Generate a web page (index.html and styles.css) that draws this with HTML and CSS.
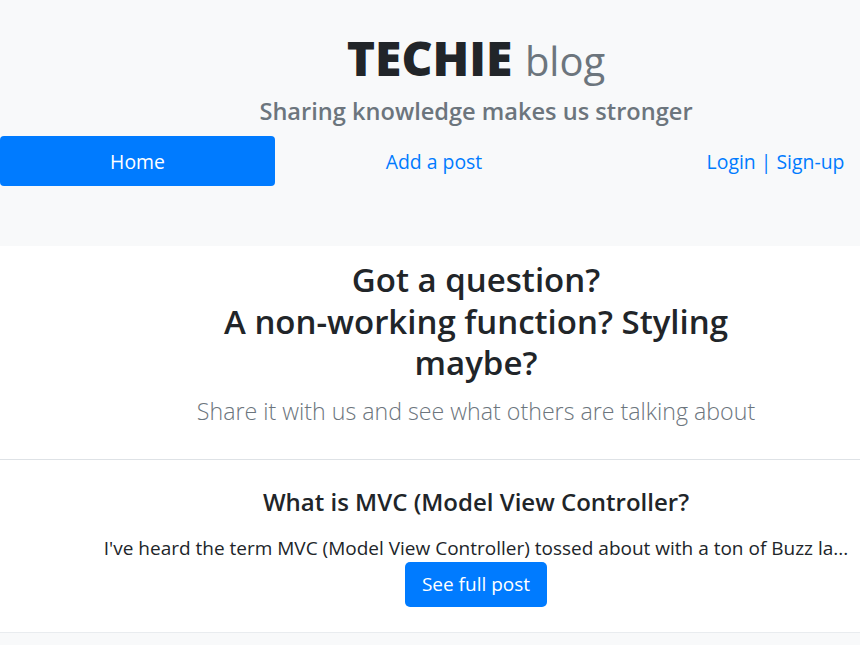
FILE: index.html
```html
<!DOCTYPE html>
<html lang="en">
<head>
<meta charset="utf-8">
<title>TECHIE blog</title>
<link rel="stylesheet" href="styles.css">
</head>
<body>
<div class="page">
  <header class="masthead">
    <h1 class="brand"><strong>TECHIE</strong> <small>blog</small></h1>
    <p class="tagline">Sharing knowledge makes us stronger</p>
    <nav class="mainnav">
      <a class="nav-link active" href="#">Home</a>
      <a class="nav-link" href="#">Add a post</a>
      <span class="nav-link"><span class="auth"><a href="#">Login</a> | <a href="#">Sign-up</a></span></span>
    </nav>
  </header>
  <section class="hero">
    <h2 class="hero-title">Got a question?<br>A non-working function? Styling maybe?</h2>
    <p class="lead">Share it with us and see what others are talking about</p>
  </section>
  <article class="post">
    <h4 class="post-title">What is MVC (Model View Controller?</h4>
    <p class="excerpt">I've heard the term MVC (Model View Controller) tossed about with a ton of Buzz la...</p>
    <a class="btn" href="#">See full post</a>
  </article>
  <div class="rest"></div>
</div>
</body>
</html>
```

FILE: styles.css
```css
html, body {
  margin: 0;
  padding: 0;
  overflow: hidden;
  background: #f8f9fa;
}
body {
  font-family: "Open Sans", "Noto Sans", "DejaVu Sans", sans-serif;
  color: #212529;
}
a {
  color: #007bff;
  text-decoration: none;
}
.page {
  width: 952px;
  min-height: 645px;
  display: flex;
  flex-direction: column;
}
.masthead {
  background: #f8f9fa;
  padding: 29px 0 60px;
  text-align: center;
}
.brand {
  margin: 0;
  line-height: 58px;
  font-size: 48px;
  font-weight: 700;
}
.brand small {
  font-size: 40px;
  font-weight: 400;
  color: #6c757d;
}
.tagline {
  margin: 6px 0 0;
  font-size: 23.6px;
  line-height: 30px;
  font-weight: 600;
  color: #6c757d;
}
.mainnav {
  margin-top: 10px;
  display: grid;
  grid-template-columns: 275px 318px 1fr;
  height: 50px;
}
.nav-link {
  display: flex;
  align-items: center;
  justify-content: center;
  font-size: 19.4px;
  color: #007bff;
  border-radius: 4px;
}
.auth {
  padding-left: 6px;
}
.nav-link.active {
  background: #007bff;
  color: #fff;
}
.hero {
  background: #fff;
  text-align: center;
  padding: 13px 0 33px;
  border-bottom: 1px solid #dee2e6;
}
.hero-title {
  margin: 0 auto;
  max-width: 570px;
  font-size: 33px;
  line-height: 41.5px;
  font-weight: 600;
}
.lead {
  margin: 12px 0 0;
  font-size: 23.2px;
  line-height: 30px;
  font-weight: 300;
  color: #6c757d;
}
.post {
  background: #fff;
  padding: 27px 0 25px;
  border-bottom: 1px solid #e9ecef;
  display: flex;
  flex-direction: column;
  align-items: center;
}
.post-title {
  margin: 0;
  font-size: 24px;
  line-height: 30px;
  font-weight: 600;
}
.excerpt {
  margin: 19px 0 2px;
  font-size: 19px;
  line-height: 24px;
  white-space: nowrap;
}
.btn {
  display: flex;
  align-items: center;
  height: 45px;
  padding: 0 17px;
  font-size: 19px;
  color: #fff;
  background: #007bff;
  border-radius: 5px;
}
.rest {
  flex: 1;
  background: #f8f9fa;
}
```
